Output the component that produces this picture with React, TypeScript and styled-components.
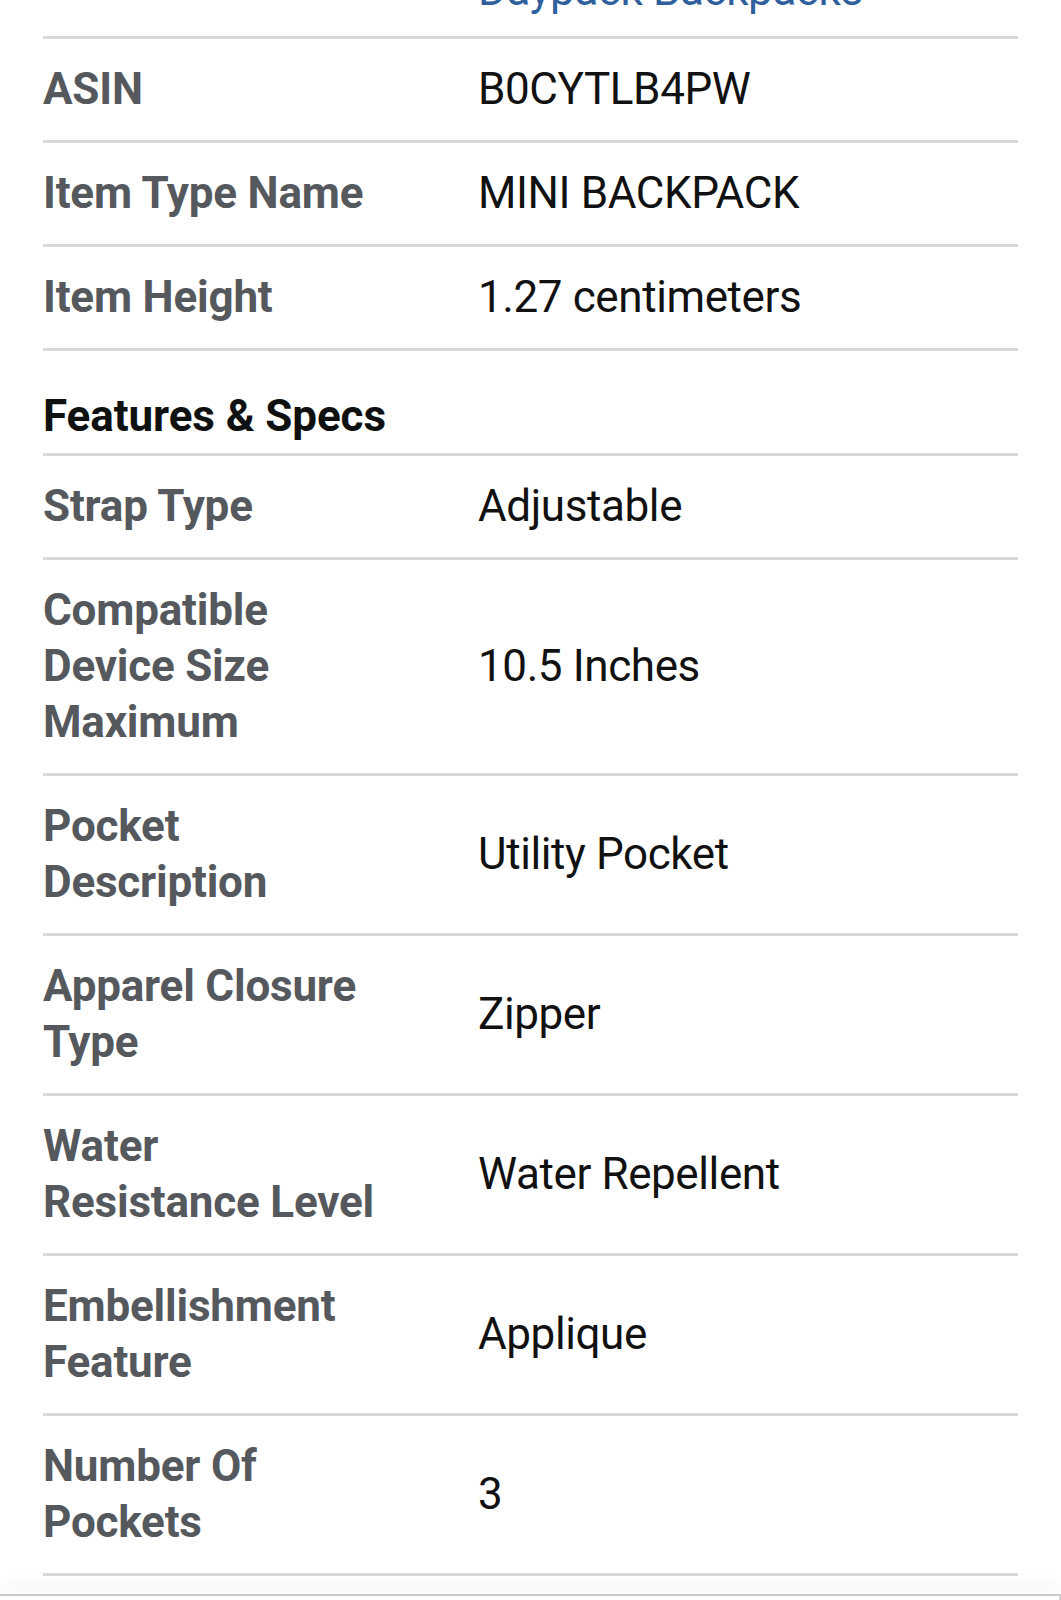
import React from "react";
import styled, { createGlobalStyle } from "styled-components";

const GlobalStyle = createGlobalStyle`
  html, body {
    margin: 0;
    padding: 0;
    background: #ffffff;
  }
  body {
    font-family: Roboto, "Noto Sans", "Liberation Sans", sans-serif;
    -webkit-font-smoothing: antialiased;
  }
`;

const Page = styled.div`
  width: 1061px;
  height: 1600px;
  overflow: hidden;
  display: flex;
  flex-direction: column;
  background: #ffffff;
`;

const Table = styled.div`
  margin: -65px 43px 0 43px;
  display: flex;
  flex-direction: column;
`;

const Row = styled.div<{ $clipped?: boolean }>`
  display: grid;
  grid-template-columns: 435px 1fr;
  align-items: center;
  padding: ${(p) => (p.$clipped ? "27px 0 18px 0" : "22px 0 23px 0")};
  border-bottom: 3px solid #d7d8d9;
`;

const Label = styled.div`
  font-size: 44px;
  line-height: 56px;
  font-weight: 700;
  color: #55585c;
  letter-spacing: -0.2px;
  white-space: pre-line;
`;

const Value = styled.div<{ $link?: boolean }>`
  font-size: 44px;
  line-height: 56px;
  font-weight: 400;
  color: ${(p) => (p.$link ? "#2f5f9c" : "#111111")};
  letter-spacing: -0.4px;
`;

const SectionHeader = styled.div`
  padding: 37px 0 9px 0;
  border-bottom: 3px solid #d7d8d9;
  font-size: 44px;
  line-height: 56px;
  font-weight: 700;
  color: #0f1111;
  letter-spacing: -0.1px;
`;

const BottomBar = styled.div`
  margin-top: 18px;
  height: 40px;
  background: #fdfdfd;
  border-top: 2px solid #c9cacb;
  border-right: 2px solid #d0d1d2;
  box-shadow: 0 -10px 14px rgba(0, 0, 0, 0.06);
`;

type Spec = { label: string; value: string };

const general: Spec[] = [
  { label: "ASIN", value: "B0CYTLB4PW" },
  { label: "Item Type Name", value: "MINI BACKPACK" },
  { label: "Item Height", value: "1.27 centimeters" },
];

const features: Spec[] = [
  { label: "Strap Type", value: "Adjustable" },
  { label: "Compatible\nDevice Size\nMaximum", value: "10.5 Inches" },
  { label: "Pocket\nDescription", value: "Utility Pocket" },
  { label: "Apparel Closure\nType", value: "Zipper" },
  { label: "Water\nResistance Level", value: "Water Repellent" },
  { label: "Embellishment\nFeature", value: "Applique" },
  { label: "Number Of\nPockets", value: "3" },
];

export default function App() {
  return (
    <Page>
      <GlobalStyle />
      <Table>
        <Row $clipped>
          <Label />
          <Value $link>Daypack Backpacks</Value>
        </Row>
        {general.map((s) => (
          <Row key={s.label}>
            <Label>{s.label}</Label>
            <Value>{s.value}</Value>
          </Row>
        ))}
        <SectionHeader>Features &amp; Specs</SectionHeader>
        {features.map((s) => (
          <Row key={s.label}>
            <Label>{s.label}</Label>
            <Value>{s.value}</Value>
          </Row>
        ))}
      </Table>
      <BottomBar />
    </Page>
  );
}
